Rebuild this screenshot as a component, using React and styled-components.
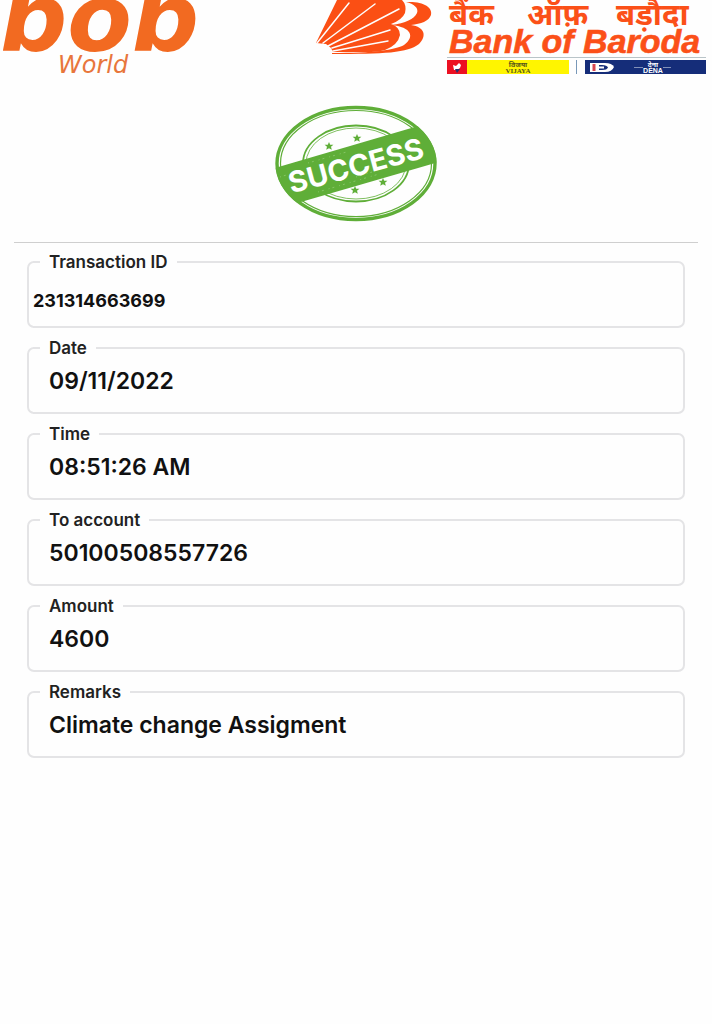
import React from 'react';
import styled, { createGlobalStyle } from 'styled-components';

const GlobalStyle = createGlobalStyle`
  * { box-sizing: border-box; }
  body {
    margin: 0;
    background: #fefefe;
    color: #111;
    font-family: Inter, "Liberation Sans", sans-serif;
  }
`;

const Page = styled.main`
  min-height: 100vh;
`;

const Header = styled.header`
  display: flex;
  justify-content: space-between;
  height: 80px;
  overflow: hidden;
`;

const Logo = styled.svg`
  display: block;
  flex: none;
`;

const StampArea = styled.section`
  display: flex;
  justify-content: center;
  margin: 0 14px;
  padding: 25px 0 19px;
  border-bottom: 1px solid #cfcfcf;
`;

const Details = styled.form`
  display: flex;
  flex-direction: column;
  gap: 11px;
  padding: 10px 27px 0;
`;

const Field = styled.fieldset`
  min-width: 0;
  height: 75px;
  margin: 0;
  padding: 0 0 0 ${(p) => (p.$compact ? 4 : 20)}px;
  border: 2px solid #e4e4e6;
  border-radius: 7px;
`;

const Legend = styled.legend`
  margin-left: ${(p) => (p.$compact ? 7 : -9)}px;
  padding: 0 9px;
  font-size: 17px;
  font-weight: 600;
  line-height: 18px;
  color: #222;
`;

const Value = styled.input.attrs({ type: 'text', readOnly: true })`
  display: block;
  width: 100%;
  height: 48px;
  margin: 0;
  padding: ${(p) => (p.$compact ? '10px 0 0' : '0')};
  border: 0;
  outline: 0;
  background: transparent;
  color: #111;
  font-family: inherit;
  font-size: ${(p) => (p.$compact ? 18 : 23)}px;
  font-weight: ${(p) => (p.$compact ? 700 : 600)};
`;

const fields = [
  { id: 'transaction', label: 'Transaction ID', value: '231314663699', compact: true },
  { id: 'date', label: 'Date', value: '09/11/2022' },
  { id: 'time', label: 'Time', value: '08:51:26 AM' },
  { id: 'account', label: 'To account', value: '50100508557726' },
  { id: 'amount', label: 'Amount', value: '4600' },
  { id: 'remarks', label: 'Remarks', value: 'Climate change Assigment' },
];

function BobLogo() {
  return (
    <Logo width="230" height="80" viewBox="0 0 230 80" role="img" aria-label="bob World">
      <text x="0" y="51" fill="#f26a21" fontFamily="DejaVu Sans, sans-serif" fontWeight="700" fontStyle="italic" fontSize="94">bob</text>
      <text x="58" y="73" fill="#e8763c" fontFamily="DejaVu Sans, sans-serif" fontStyle="italic" fontSize="24">World</text>
    </Logo>
  );
}

function BankLogo() {
  return (
    <Logo width="400" height="80" viewBox="312 0 400 80" role="img" aria-label="Bank of Baroda">
      <g fill="#fb4f14">
        <path d="M337 0H402Q407 5 405 13Q402 20 391 24Q400 27 400 35Q398 45 385 50Q377 52 366 52L333 52L331 48L326 44L316 43Z" />
        <path d="M406 2C423 1 433 7 431 15C429 21 421 24 411 25C425 27 427 36 419 44C408 53 384 54 332 54V53C374 53 395 50 404 45C415 37 412 27 391 25C406 23 414 19 417 13C419 8 414 4 406 2Z" />
      </g>
      <g fill="none" stroke="#fefefe" strokeWidth="1.5" strokeLinecap="round">
        <path d="M317 43L349 3M323 43L375 4M328 46L399 9M332 48L390 30M333 51L388 41" />
      </g>
      <g fill="#fb5018" fontStyle="italic" fontWeight="700">
        <g fontFamily="Noto Sans, sans-serif" fontSize="31">
          <text x="449" y="25">बैंक</text>
          <text x="527" y="25">ऑफ़</text>
          <text x="616" y="25">बड़ौदा</text>
        </g>
        <text x="449" y="53" fontFamily="Liberation Sans, sans-serif" fontSize="34" stroke="#fb5018" strokeWidth="0.6">Bank of Baroda</text>
      </g>
      <path d="M447 57.5H706" stroke="#b9c4c8" />
      <path d="M447 60H467V74H447Z" fill="#ec1022" />
      <path d="M453 65L456 66L459 63L461 65L460 68L457 70H454Z" fill="#fff" />
      <path d="M455 69H460L457 73Z" fill="#29316f" />
      <path d="M467 60H569V74H467Z" fill="#fff500" />
      <path d="M576.5 60V74" stroke="#7898b8" />
      <path d="M585 60H706V74H585Z" fill="#152d79" />
      <path d="M590 63H605Q612 63 614 67Q612 72 605 72H590Z" fill="#fff" />
      <path d="M594 64V71" stroke="#d64650" strokeWidth="3" />
      <path d="M599 65H602Q607 65 608 67.5Q607 70 602 70H599V68.5H604V66.5H599Z" fill="#152d79" />
      <path d="M634 67.5H643M663 67.5H671" stroke="#8290b8" />
      <g textAnchor="middle" fontWeight="700">
        <g fill="#55551c">
          <text x="518" y="67" fontFamily="Noto Sans, sans-serif" fontSize="7">विजया</text>
          <text x="518" y="73" fontFamily="Liberation Serif, serif" fontSize="7">VIJAYA</text>
        </g>
        <g fill="#fff">
          <text x="653" y="67" fontFamily="Noto Sans, sans-serif" fontSize="7">देना</text>
          <text x="653" y="73" fontFamily="Liberation Sans, sans-serif" fontSize="7">DENA</text>
        </g>
      </g>
    </Logo>
  );
}

const star = 'M0 -4L1.2 -1.3L4.4 -1.2L2 .8L2.8 3.8L0 2.2L-2.8 3.8L-2 .8L-4.4 -1.2L-1.2 -1.3Z';
const stars = [[329, 146], [357, 138], [355, 190], [383, 182]];

function SuccessStamp() {
  return (
    <Logo width="164" height="118" viewBox="274 105 164 118" role="img" aria-label="Success">
      <defs>
        <clipPath id="stamp-edge"><ellipse cx="356" cy="163.5" rx="80.5" ry="57.5" /></clipPath>
      </defs>
      <g fill="none" stroke="#5fae38">
        <ellipse cx="356" cy="163.5" rx="79" ry="56" strokeWidth="3.4" />
        <ellipse cx="356" cy="163.5" rx="75.5" ry="53" strokeWidth="1.2" />
        <ellipse cx="356" cy="163.5" rx="53" ry="38" strokeWidth="1.8" />
        <ellipse cx="356" cy="163.5" rx="50" ry="35.5" strokeWidth="0.8" />
      </g>
      {stars.map(([x, y]) => (
        <path key={x} d={star} transform={`translate(${x} ${y})`} fill="#5fae38" />
      ))}
      <g clipPath="url(#stamp-edge)">
        <path d="M270 169.5L442 119V161L270 211Z" fill="#5fae38" />
      </g>
      <g stroke="#86c566" strokeWidth="1" strokeDasharray="1 3 2 5">
        <path d="M308 163L350 151M318 192L379 174M356 177L372 172M280 177L296 172" />
      </g>
      <text x="356" y="176" textAnchor="middle" transform="rotate(-15 356 166)" fill="#fff" fontFamily="Inter, sans-serif" fontWeight="700" fontSize="29">SUCCESS</text>
    </Logo>
  );
}

export default function App() {
  return (
    <Page>
      <GlobalStyle />
      <Header>
        <BobLogo />
        <BankLogo />
      </Header>
      <StampArea>
        <SuccessStamp />
      </StampArea>
      <Details>
        {fields.map(({ id, label, value, compact }) => (
          <Field key={id} $compact={compact}>
            <Legend $compact={compact}>
              <label htmlFor={id}>{label}</label>
            </Legend>
            <Value id={id} defaultValue={value} $compact={compact} />
          </Field>
        ))}
      </Details>
    </Page>
  );
}
